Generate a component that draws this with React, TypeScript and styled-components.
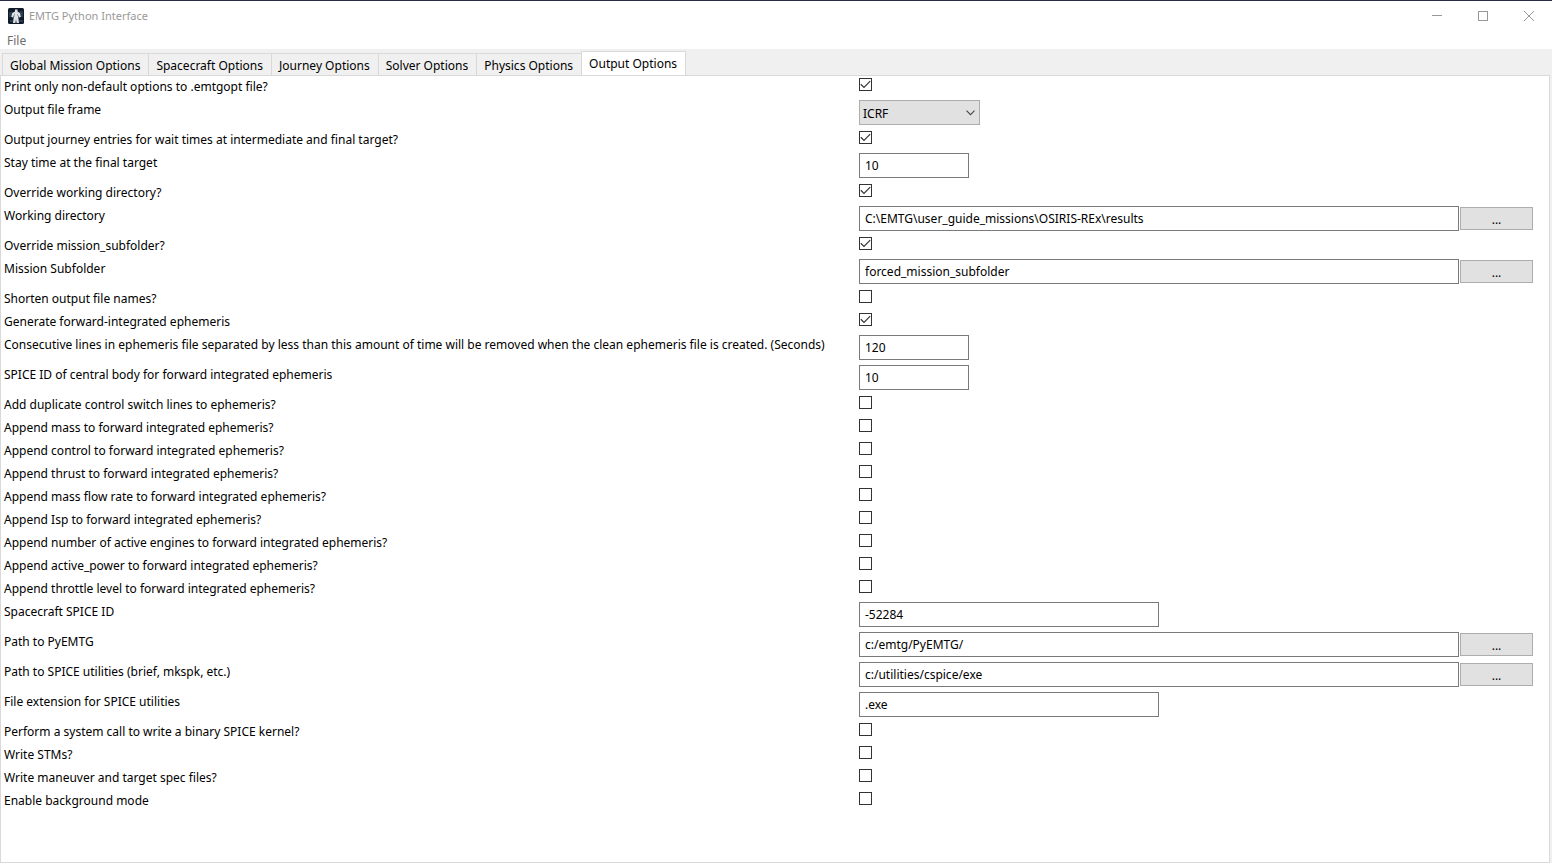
import React from "react";
import styled, { createGlobalStyle, css } from "styled-components";

const GlobalStyle = createGlobalStyle`
  *, *::before, *::after { box-sizing: border-box; }
  html, body, #root { height: 100%; }
  body {
    margin: 0;
    background: #ffffff;
    color: #000000;
    font-family: "Noto Sans", "Open Sans", sans-serif;
    font-size: 12px;
    line-height: 18px;
  }
  button, input, select { font: inherit; color: inherit; margin: 0; border-radius: 0; }
`;

const Window = styled.div`
  display: flex;
  flex-direction: column;
  min-height: 100%;
  border-top: 1px solid #2a2c45;
`;

const TitleBar = styled.header`
  display: flex;
  align-items: center;
  height: 30px;
  padding-left: 8px;
  background: #ffffff;
`;

const AppIcon = styled.svg`
  width: 16px;
  height: 16px;
  flex: none;
`;

const Title = styled.h1`
  flex: 1;
  margin: 0 0 0 5px;
  font-size: 11px;
  font-weight: 400;
  color: #999999;
`;

const WindowButton = styled.button`
  display: flex;
  align-items: center;
  justify-content: center;
  width: 46px;
  height: 30px;
  padding: 0;
  border: 0;
  background: transparent;
  color: #999999;
`;

const MenuBar = styled.nav`
  display: flex;
  height: 18px;
`;

const MenuButton = styled.button`
  padding: 0 7px;
  border: 0;
  background: transparent;
  color: #6d6d6d;
  line-height: 20px;
`;

const Notebook = styled.main`
  flex: 1;
  display: flex;
  flex-direction: column;
  padding: 2px 2px 0 0;
  background: #f0f0f0;
`;

const TabList = styled.div`
  display: flex;
  align-items: flex-end;
  height: 25px;
  margin-bottom: -1px;
  padding-left: 2px;
`;

const Tab = styled.button<{ $active?: boolean }>`
  height: 23px;
  padding: 2px 8px 0 7px;
  border: 1px solid #d9d9d9;
  border-right-width: 0;
  background: #f0f0f0;
  white-space: nowrap;
  ${(p) =>
    p.$active &&
    css`
      height: 25px;
      padding: 0 8px 0 7px;
      border-right-width: 1px;
      border-bottom-color: #ffffff;
      background: #ffffff;
    `}
`;

const Panel = styled.section`
  flex: 1;
  padding-left: 3px;
  border: 1px solid #d9d9d9;
  background: #ffffff;
`;

const Row = styled.div<{ $tall: boolean }>`
  display: grid;
  grid-template-columns: minmax(0, 855px) minmax(0, 1fr);
  height: ${(p) => (p.$tall ? 30 : 23)}px;
`;

const Label = styled.label`
  padding-top: 2px;
  white-space: nowrap;
`;

const Controls = styled.div`
  display: flex;
  align-items: flex-start;
  gap: 1px;
  padding: 1px 16px 0 0;
`;

const CheckWrap = styled.span`
  display: grid;
  margin-top: 1px;
  > * { grid-area: 1 / 1; }
`;

const Check = styled.input`
  appearance: none;
  width: 13px;
  height: 13px;
  border: 1px solid #333333;
  background: #ffffff;
  & + svg { visibility: hidden; pointer-events: none; }
  &:checked + svg { visibility: visible; }
`;

const TextBox = styled.input<{ $width: number }>`
  width: ${(p) => p.$width}px;
  min-width: 0;
  height: 25px;
  padding: 0 5px;
  border: 1px solid #7a7a7a;
  background: #ffffff;
`;

const SelectWrap = styled.span`
  display: grid;
  align-items: center;
  > * { grid-area: 1 / 1; }
  > svg { justify-self: end; margin-right: 5px; pointer-events: none; }
`;

const Select = styled.select`
  appearance: none;
  width: 121px;
  height: 25px;
  padding: 2px 3px 0;
  border: 1px solid #adadad;
  background: #e1e1e1;
`;

const Browse = styled.button`
  width: 73px;
  height: 23px;
  margin-top: 1px;
  padding: 2px 0 0;
  border: 1px solid #adadad;
  background: #e1e1e1;
`;

type Option =
  | { kind: "check"; label: string; on?: boolean }
  | { kind: "select"; label: string; value: string }
  | { kind: "text"; label: string; value: string; width: number; browse?: boolean };

const tabs = [
  "Global Mission Options",
  "Spacecraft Options",
  "Journey Options",
  "Solver Options",
  "Physics Options",
  "Output Options",
];

const options: Option[] = [
  { kind: "check", label: "Print only non-default options to .emtgopt file?", on: true },
  { kind: "select", label: "Output file frame", value: "ICRF" },
  { kind: "check", label: "Output journey entries for wait times at intermediate and final target?", on: true },
  { kind: "text", label: "Stay time at the final target", value: "10", width: 110 },
  { kind: "check", label: "Override working directory?", on: true },
  { kind: "text", label: "Working directory", value: "C:\\EMTG\\user_guide_missions\\OSIRIS-REx\\results", width: 600, browse: true },
  { kind: "check", label: "Override mission_subfolder?", on: true },
  { kind: "text", label: "Mission Subfolder", value: "forced_mission_subfolder", width: 600, browse: true },
  { kind: "check", label: "Shorten output file names?" },
  { kind: "check", label: "Generate forward-integrated ephemeris", on: true },
  {
    kind: "text",
    label:
      "Consecutive lines in ephemeris file separated by less than this amount of time will be removed when the clean ephemeris file is created. (Seconds)",
    value: "120",
    width: 110,
  },
  { kind: "text", label: "SPICE ID of central body for forward integrated ephemeris", value: "10", width: 110 },
  { kind: "check", label: "Add duplicate control switch lines to ephemeris?" },
  { kind: "check", label: "Append mass to forward integrated ephemeris?" },
  { kind: "check", label: "Append control to forward integrated ephemeris?" },
  { kind: "check", label: "Append thrust to forward integrated ephemeris?" },
  { kind: "check", label: "Append mass flow rate to forward integrated ephemeris?" },
  { kind: "check", label: "Append Isp to forward integrated ephemeris?" },
  { kind: "check", label: "Append number of active engines to forward integrated ephemeris?" },
  { kind: "check", label: "Append active_power to forward integrated ephemeris?" },
  { kind: "check", label: "Append throttle level to forward integrated ephemeris?" },
  { kind: "text", label: "Spacecraft SPICE ID", value: "-52284", width: 300 },
  { kind: "text", label: "Path to PyEMTG", value: "c:/emtg/PyEMTG/", width: 600, browse: true },
  { kind: "text", label: "Path to SPICE utilities (brief, mkspk, etc.)", value: "c:/utilities/cspice/exe", width: 600, browse: true },
  { kind: "text", label: "File extension for SPICE utilities", value: ".exe", width: 300 },
  { kind: "check", label: "Perform a system call to write a binary SPICE kernel?" },
  { kind: "check", label: "Write STMs?" },
  { kind: "check", label: "Write maneuver and target spec files?" },
  { kind: "check", label: "Enable background mode" },
];

function OptionRow({ option, id }: { option: Option; id: string }) {
  return (
    <Row $tall={option.kind !== "check"}>
      <Label htmlFor={id}>{option.label}</Label>
      <Controls>
        {option.kind === "check" && (
          <CheckWrap>
            <Check id={id} type="checkbox" defaultChecked={option.on} />
            <svg width="13" height="13" viewBox="0 0 13 13" aria-hidden="true">
              <path d="M1.8 6.3 5 9.4 11.2 3.2" fill="none" stroke="#333333" strokeWidth="1.2" />
            </svg>
          </CheckWrap>
        )}
        {option.kind === "select" && (
          <SelectWrap>
            <Select id={id} defaultValue={option.value}>
              <option>{option.value}</option>
            </Select>
            <svg width="9" height="6" viewBox="0 0 9 6" aria-hidden="true">
              <path d="M0.5 0.7 4.5 4.7 8.5 0.7" fill="none" stroke="#444444" strokeWidth="1.1" />
            </svg>
          </SelectWrap>
        )}
        {option.kind === "text" && (
          <>
            <TextBox id={id} type="text" $width={option.width} defaultValue={option.value} />
            {option.browse && <Browse type="button" aria-label={`Browse: ${option.label}`}>...</Browse>}
          </>
        )}
      </Controls>
    </Row>
  );
}

export default function App() {
  return (
    <>
      <GlobalStyle />
      <Window>
        <TitleBar>
          <AppIcon viewBox="0 0 16 16" aria-hidden="true">
            <rect width="16" height="16" rx="1.5" fill="#101a28" />
            <path d="M1 4h3v5H1zM12 3h3v6h-3zM2 12h3v2H2zM11 12h4v2h-4z" fill="#2b3b50" />
            <path
              d="M7 1.5h2.5v2L12 5l.8 4-1.6.6-.8-2.6v3l.6 5H8.6L8 11.5 7.4 15H5l.6-5V7l-.8 2.5L3.3 9 4.2 5 7 3.5z"
              fill="#dfe3e6"
            />
            <path d="M6 5.5h1v3H6zM9 6h1v2H9z" fill="#a8afb7" />
          </AppIcon>
          <Title>EMTG Python Interface</Title>
          <WindowButton type="button" aria-label="Minimize">
            <svg width="10" height="10" viewBox="0 0 10 10">
              <path d="M0 4.5H10" stroke="currentColor" />
            </svg>
          </WindowButton>
          <WindowButton type="button" aria-label="Maximize">
            <svg width="10" height="10" viewBox="0 0 10 10">
              <rect x="0.5" y="0.5" width="9" height="9" fill="none" stroke="currentColor" />
            </svg>
          </WindowButton>
          <WindowButton type="button" aria-label="Close">
            <svg width="10" height="10" viewBox="0 0 10 10">
              <path d="M0 0 10 10M10 0 0 10" stroke="currentColor" />
            </svg>
          </WindowButton>
        </TitleBar>
        <MenuBar>
          <MenuButton type="button">File</MenuButton>
        </MenuBar>
        <Notebook>
          <TabList role="tablist">
            {tabs.map((name, i) => {
              const active = i === tabs.length - 1;
              return (
                <Tab key={name} type="button" role="tab" aria-selected={active} $active={active}>
                  {name}
                </Tab>
              );
            })}
          </TabList>
          <Panel role="tabpanel">
            {options.map((option, i) => (
              <OptionRow key={option.label} option={option} id={`option-${i}`} />
            ))}
          </Panel>
        </Notebook>
      </Window>
    </>
  );
}
